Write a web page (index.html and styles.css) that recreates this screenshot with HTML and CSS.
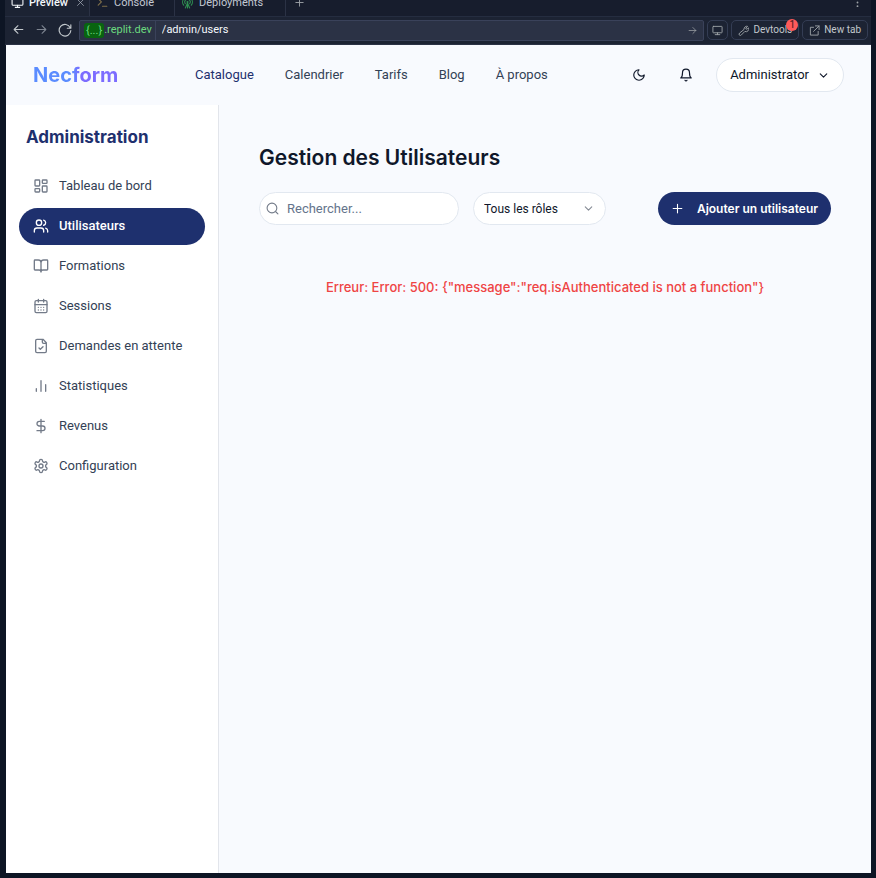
FILE: index.html
```html
<!DOCTYPE html>
<html lang="fr">
<head>
<meta charset="utf-8">
<meta name="viewport" content="width=device-width, initial-scale=1">
<title>Gestion des Utilisateurs</title>
<link rel="stylesheet" href="styles.css">
</head>
<body>
<div class="browser">
  <div class="tabs">
    <button class="tab tab-active"><svg class="icon i13" viewBox="0 0 24 24"><rect x="2" y="3" width="20" height="14" rx="2"/><path d="M8 21h8M12 17v4"/></svg><span>Preview</span><svg class="icon i9 tab-close" viewBox="0 0 24 24"><path d="M4 4l16 16M20 4L4 20"/></svg></button>
    <button class="tab tab-console"><svg class="icon i13 console-icon" viewBox="0 0 24 24"><path d="M4 17l6-6-6-6M12 19h8"/></svg><span>Console</span></button>
    <button class="tab tab-deploy"><svg class="icon i13 deploy-icon" viewBox="0 0 24 24"><path d="M12 12v10M8 22l4-9 4 9M5 17a9 9 0 1 1 14 0M8 14a5 5 0 1 1 8 0"/><circle cx="12" cy="11" r="1"/></svg><span>Deployments</span></button>
    <button class="tab tab-plain" aria-label="Nouvel onglet"><svg class="icon i11" viewBox="0 0 24 24"><path d="M4 12h16M12 4v16"/></svg></button>
    <button class="tab tab-plain tab-more" aria-label="Menu"><svg class="icon i11 dots" viewBox="0 0 24 24"><circle cx="12" cy="4" r="2"/><circle cx="12" cy="12" r="2"/><circle cx="12" cy="20" r="2"/></svg></button>
  </div>
  <div class="toolbar">
    <div class="history">
      <button aria-label="Précédent"><svg class="icon i13" viewBox="0 0 24 24"><path d="M20 12H4M11 5l-7 7 7 7"/></svg></button>
      <button class="dim" aria-label="Suivant"><svg class="icon i13" viewBox="0 0 24 24"><path d="M4 12h16M13 5l7 7-7 7"/></svg></button>
      <button aria-label="Recharger"><svg class="icon i14" viewBox="0 0 24 24"><path d="M22 3v6h-6M21 8a10 10 0 1 0 1 5"/></svg></button>
    </div>
    <div class="address">
      <div class="domain"><span class="chip">{...}</span>.replit.dev</div>
      <input class="path" aria-label="Adresse" value="/admin/users">
      <svg class="icon i9 go" viewBox="0 0 24 24"><path d="M3 12h18M13 4l8 8-8 8"/></svg>
    </div>
    <button class="tool tool-square" aria-label="Taille"><svg class="icon i11" viewBox="0 0 24 24"><rect x="2" y="3" width="20" height="14" rx="1"/><path d="M7 21h10M12 17v4"/></svg></button>
    <button class="tool"><svg class="icon i11" viewBox="0 0 24 24"><path d="M13 9a6 6 0 0 1 8-6l-4 4 1 2 2 0 3-3a6 6 0 0 1-8 8l-8 8a2.500 2.500 0 0 1-4-4z"/></svg>Devtools<span class="badge">1</span></button>
    <button class="tool"><svg class="icon i11" viewBox="0 0 24 24"><path d="M10 5H3v17h17v-8M14 2h8v8M22 2L10 14"/></svg>New tab</button>
  </div>
  <div class="app">
    <header class="header">
      <a class="logo" href="#">Necform</a>
      <nav class="nav">
        <a class="current" href="#">Catalogue</a><a href="#">Calendrier</a><a href="#">Tarifs</a><a href="#">Blog</a><a href="#">À propos</a>
      </nav>
      <div class="actions">
        <button class="round" aria-label="Thème"><svg class="icon i14" viewBox="0 0 24 24"><path d="M12 3a6 6 0 0 0 9 9 9 9 0 1 1-9-9Z"/></svg></button>
        <button class="round" aria-label="Notifications"><svg class="icon i14" viewBox="0 0 24 24"><path d="M6 8a6 6 0 0 1 12 0c0 7 3 9 3 9H3s3-2 3-9M10.300 21a1.940 1.940 0 0 0 3.400 0"/></svg></button>
        <button class="account">Administrator<svg class="icon i13" viewBox="0 0 24 24"><path d="m6 9 6 6 6-6"/></svg></button>
      </div>
    </header>
    <div class="columns">
      <aside class="sidebar">
        <h2>Administration</h2>
        <nav class="menu">
          <a href="#"><svg class="icon i16" viewBox="0 0 24 24"><rect x="3" y="3" width="7" height="9" rx="1"/><rect x="14" y="3" width="7" height="5" rx="1"/><rect x="14" y="12" width="7" height="9" rx="1"/><rect x="3" y="16" width="7" height="5" rx="1"/></svg>Tableau de bord</a>
          <a class="selected" href="#"><svg class="icon i16" viewBox="0 0 24 24"><path d="M16 21v-2a4 4 0 0 0-4-4H6a4 4 0 0 0-4 4v2M22 21v-2a4 4 0 0 0-3-3.870M16 3.130a4 4 0 0 1 0 7.750"/><circle cx="9" cy="7" r="4"/></svg>Utilisateurs</a>
          <a href="#"><svg class="icon i16" viewBox="0 0 24 24"><path d="M12 7v14M3 18a1 1 0 0 1-1-1V4a1 1 0 0 1 1-1h5a4 4 0 0 1 4 4 4 4 0 0 1 4-4h5a1 1 0 0 1 1 1v13a1 1 0 0 1-1 1h-6a3 3 0 0 0-3 3 3 3 0 0 0-3-3z"/></svg>Formations</a>
          <a href="#"><svg class="icon i16" viewBox="0 0 24 24"><rect x="3" y="4" width="18" height="18" rx="2"/><path d="M16 2v4M8 2v4M3 10h18M8 14h.01M12 14h.01M16 14h.01M8 18h.01M12 18h.01M16 18h.01"/></svg>Sessions</a>
          <a href="#"><svg class="icon i16" viewBox="0 0 24 24"><path d="M15 2H6a2 2 0 0 0-2 2v16a2 2 0 0 0 2 2h12a2 2 0 0 0 2-2V7zM14 2v4a2 2 0 0 0 2 2h4M9 15l2 2 4-4"/></svg>Demandes en attente</a>
          <a href="#"><svg class="icon i16" viewBox="0 0 24 24"><path d="M5 20v-4M12 20V4M19 20V10"/></svg>Statistiques</a>
          <a href="#"><svg class="icon i16" viewBox="0 0 24 24"><path d="M12 2v20M17 5H9.500a3.500 3.500 0 0 0 0 7h5a3.500 3.500 0 0 1 0 7H6"/></svg>Revenus</a>
          <a href="#"><svg class="icon i16" viewBox="0 0 24 24"><path d="M12.220 2h-.44a2 2 0 0 0-2 2v.18a2 2 0 0 1-1 1.730l-.43.25a2 2 0 0 1-2 0l-.15-.08a2 2 0 0 0-2.730.73l-.22.38a2 2 0 0 0 .73 2.730l.15.1a2 2 0 0 1 1 1.720v.51a2 2 0 0 1-1 1.740l-.15.09a2 2 0 0 0-.73 2.730l.22.38a2 2 0 0 0 2.730.73l.15-.08a2 2 0 0 1 2 0l.43.25a2 2 0 0 1 1 1.730V20a2 2 0 0 0 2 2h.44a2 2 0 0 0 2-2v-.18a2 2 0 0 1 1-1.730l.43-.25a2 2 0 0 1 2 0l.15.08a2 2 0 0 0 2.730-.73l.22-.39a2 2 0 0 0-.73-2.730l-.15-.08a2 2 0 0 1-1-1.740v-.5a2 2 0 0 1 1-1.740l.15-.09a2 2 0 0 0 .73-2.730l-.22-.38a2 2 0 0 0-2.730-.73l-.15.08a2 2 0 0 1-2 0l-.43-.25a2 2 0 0 1-1-1.730V4a2 2 0 0 0-2-2z"/><circle cx="12" cy="12" r="3"/></svg>Configuration</a>
        </nav>
      </aside>
      <main class="main">
        <h1>Gestion des Utilisateurs</h1>
        <div class="filters">
          <label class="search"><svg class="icon i13" viewBox="0 0 24 24"><circle cx="11" cy="11" r="9"/><path d="m22 22-4-4"/></svg><input type="search" aria-label="Rechercher" placeholder="Rechercher..."></label>
          <label class="role"><select aria-label="Rôle"><option>Tous les rôles</option></select><svg class="icon i13" viewBox="0 0 24 24"><path d="m6 9 6 6 6-6"/></svg></label>
          <button class="add"><svg class="icon i13" viewBox="0 0 24 24"><path d="M4 12h16M12 4v16"/></svg>Ajouter un utilisateur</button>
        </div>
        <p class="error">Erreur: Error: 500: {"message":"req.isAuthenticated is not a function"}</p>
      </main>
    </div>
  </div>
</div>
</body>
</html>
```
FILE: styles.css
```css
* { box-sizing: border-box; }
body {
  margin: 0;
  background: #0d1524;
  color: #0f172a;
  font: 13px/20px Roboto, "Liberation Sans", sans-serif;
}
button, input, select { font: inherit; color: inherit; margin: 0; padding: 0; border: 0; background: none; }
button { cursor: pointer; }
a { color: inherit; text-decoration: none; }
.icon { flex: none; fill: none; stroke: currentColor; stroke-width: 2; stroke-linecap: round; stroke-linejoin: round; }
.i9 { width: 9px; height: 9px; }
.i11 { width: 11px; height: 11px; }
.i13 { width: 13px; height: 13px; }
.i14 { width: 14px; height: 14px; }
.i16 { width: 16px; height: 16px; }

.browser { display: flex; flex-direction: column; min-height: 100vh; padding: 0 5px 5px; }
.tabs {
  display: flex;
  align-items: flex-end;
  height: 17px;
  overflow: hidden;
  background: #171d2d;
  border-bottom: 1px solid #252d40;
  color: #c2c8d2;
  font-size: 11px;
}
.tab { display: flex; flex: none; align-items: center; gap: 5px; height: 27px; padding: 0 4px 0 6px; border-right: 1px solid #2b3245; }
.tab-active { width: 85px; background: #1c2333; color: #f5f9fc; font-weight: 500; }
.tab-close { margin-left: auto; color: #a3a9b5; }
.tab-console { width: 85px; }
.tab-deploy { width: 111px; }
.console-icon { color: #80704a; }
.deploy-icon { color: #2f9151; }
.tab-plain { padding: 0 8px; border: 0; color: #9da2a6; }
.tab-more { margin-left: auto; }
.dots { fill: currentColor; stroke: none; }

.toolbar {
  display: flex;
  align-items: center;
  gap: 3px;
  height: 28px;
  padding: 0 3px 1px 7px;
  background: #1c2333;
  border-bottom: 1px solid #2b3245;
  color: #c2c8cc;
  font-size: 10px;
}
.history { display: flex; gap: 10px; margin-right: 4px; }
.history button { display: flex; }
.dim { color: #7d8490; }
.address { display: flex; flex: 1; align-items: center; min-width: 0; height: 21px; background: #2b3245; border: 1px solid #3a425a; border-radius: 2px; font-size: 11px; }
.domain { display: flex; align-items: center; height: 100%; padding: 0 3px 0 4px; border-right: 1px solid #3a425a; color: #6bd97f; }
.chip { padding: 0 2px; background: #086410; border-radius: 3px; line-height: 15px; }
.path { flex: 1; min-width: 0; padding-left: 6px; color: #f5f9fc; }
.go { margin-right: 6px; color: #9da2a6; }
.tool { position: relative; display: flex; align-items: center; gap: 4px; height: 20px; padding: 0 6px; border: 1px solid #343d54; border-radius: 5px; }
.tool .icon { color: #9da2a6; }
.tool-square { padding: 0 4px; }
.badge { position: absolute; top: -2px; right: 0; width: 12px; height: 12px; border-radius: 6px; background: #ff5a5a; color: #40151b; font-size: 10px; line-height: 12px; text-align: center; }

.app { display: flex; flex: 1; flex-direction: column; margin-left: 1px; background: #f8fafe; }
.header { display: flex; align-items: center; height: 60px; padding: 0 27px; }
.logo {
  width: 162px;
  background: linear-gradient(90deg, #5b8cff 0 24%, #7c6cff 29%);
  background-clip: text;
  color: transparent;
  font-family: Inter, sans-serif;
  font-size: 20px;
  font-weight: 700;
}
.nav { display: flex; gap: 31px; color: #334155; }
.current { color: #1e306e; }
.actions { display: flex; align-items: center; margin-left: auto; }
.round { display: flex; align-items: center; justify-content: center; width: 34px; height: 34px; margin-right: 13px; }
.account { display: flex; align-items: center; gap: 8px; height: 34px; padding: 0 13px; border: 1px solid #e2e8f0; border-radius: 17px; background: #fff; }

.columns { display: flex; flex: 1; }
.sidebar { flex: none; width: 213px; padding: 22px 13px; background: #fff; border-right: 1px solid #e2e5eb; }
.sidebar h2 { margin: 0 0 21px; padding-left: 7px; color: #1e306e; font: 700 17px/20px Inter, sans-serif; }
.menu { display: flex; flex-direction: column; gap: 3px; color: #334155; }
.menu a { display: flex; align-items: center; gap: 10px; height: 37px; padding: 0 14px 2px; border-radius: 19px; white-space: nowrap; }
.menu .icon { color: #737b89; }
.menu .selected { background: #1e306e; color: #fff; font-weight: 500; }
.menu .selected .icon { color: #fff; }

.main { flex: 1; min-width: 0; padding: 40px; }
.main h1 { margin: 0 0 21px; font: 600 21px/26px Inter, sans-serif; }
.filters { display: flex; align-items: center; gap: 14px; }
.search, .role { display: flex; align-items: center; height: 33px; border: 1px solid #e2e8f0; border-radius: 17px; background: #fff; }
.search { gap: 8px; width: 200px; padding: 0 6px; }
.search .icon { color: #737b89; }
.search input { flex: 1; min-width: 0; outline: 0; }
.search input::placeholder { color: #64748b; opacity: 1; }
.role { width: 133px; padding: 0 10px; }
.role select { flex: 1; min-width: 0; appearance: none; outline: 0; font-size: 12px; }
.role .icon { color: #858b95; }
.add { display: flex; align-items: center; gap: 13px; height: 33px; margin-left: auto; padding: 0 13px; border-radius: 17px; background: #1e306e; color: #fff; font: 600 12px/20px Inter, sans-serif; white-space: nowrap; }
.error { margin: 52px 0 0; color: #ef4444; font-family: Inter, sans-serif; font-weight: 500; text-align: center; }
```
